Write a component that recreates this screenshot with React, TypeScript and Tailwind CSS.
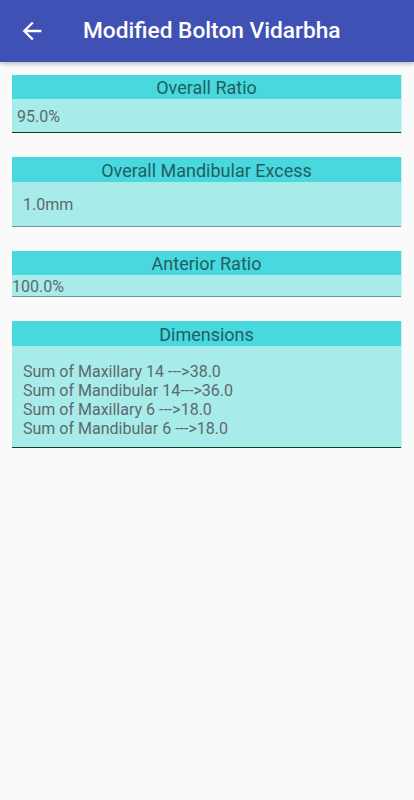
import React from "react";

const font = { fontFamily: "Roboto, 'Noto Sans', sans-serif" };

type CardProps = {
  title: string;
  headerClass: string;
  bodyClass: string;
  borderClass: string;
  children: React.ReactNode;
};

const Card: React.FC<CardProps> = ({ title, headerClass, bodyClass, borderClass, children }) => (
  <div className="mx-3 border-r border-r-[#c8f2f2]">
    <div
      className={`bg-[#48d8dd] text-center text-[18px] text-[#215f63] leading-none flex items-center justify-center pt-[2px] ${headerClass}`}
    >
      {title}
    </div>
    <div className={`bg-[#a8ebeb] text-[16px] text-[#5c6a6a] border-b ${borderClass} ${bodyClass}`}>
      {children}
    </div>
  </div>
);

export default function App() {
  return (
    <div className="min-h-[800px] bg-[#fafafa]" style={font}>
      <header className="h-[62px] bg-[#3f51b5] flex items-center shadow-[0_2px_4px_rgba(0,0,0,0.25)] relative z-10">
        <button className="ml-[18px] w-[28px] h-[28px] flex items-center justify-center text-white">
          <svg viewBox="0 0 24 24" width="28" height="28" fill="currentColor">
            <path d="M20 11H7.83l5.59-5.59L12 4l-8 8 8 8 1.41-1.41L7.83 13H20v-2z" />
          </svg>
        </button>
        <h1 className="ml-[37px] text-white text-[22.7px] font-medium">
          Modified Bolton Vidarbha
        </h1>
      </header>

      <div className="pt-[13px] flex flex-col gap-6">
        <Card
          title="Overall Ratio"
          headerClass="h-[24px]"
          bodyClass="h-[34px] pl-[5px] pt-[3px] flex items-center"
          borderClass="border-b-[#0f3325]"
        >
          95.0%
        </Card>

        <Card
          title="Overall Mandibular Excess"
          headerClass="h-[25px]"
          bodyClass="h-[45px] pl-[11px] pt-[2px] flex items-center"
          borderClass="border-b-[#6f9896]"
        >
          1.0mm
        </Card>

        <Card
          title="Anterior Ratio"
          headerClass="h-[24px]"
          bodyClass="h-[22px] pt-[2px] flex items-center"
          borderClass="border-b-[#6f9896]"
        >
          100.0%
        </Card>

        <Card
          title="Dimensions"
          headerClass="h-[25px]"
          bodyClass="h-[102px] pl-[11px] pt-[16px] leading-[19px]"
          borderClass="border-b-[#0b4326]"
        >
          <div>Sum of Maxillary 14 ---&gt;38.0</div>
          <div>Sum of Mandibular 14---&gt;36.0</div>
          <div>Sum of Maxillary 6 ---&gt;18.0</div>
          <div>Sum of Mandibular 6 ---&gt;18.0</div>
        </Card>
      </div>
    </div>
  );
}
